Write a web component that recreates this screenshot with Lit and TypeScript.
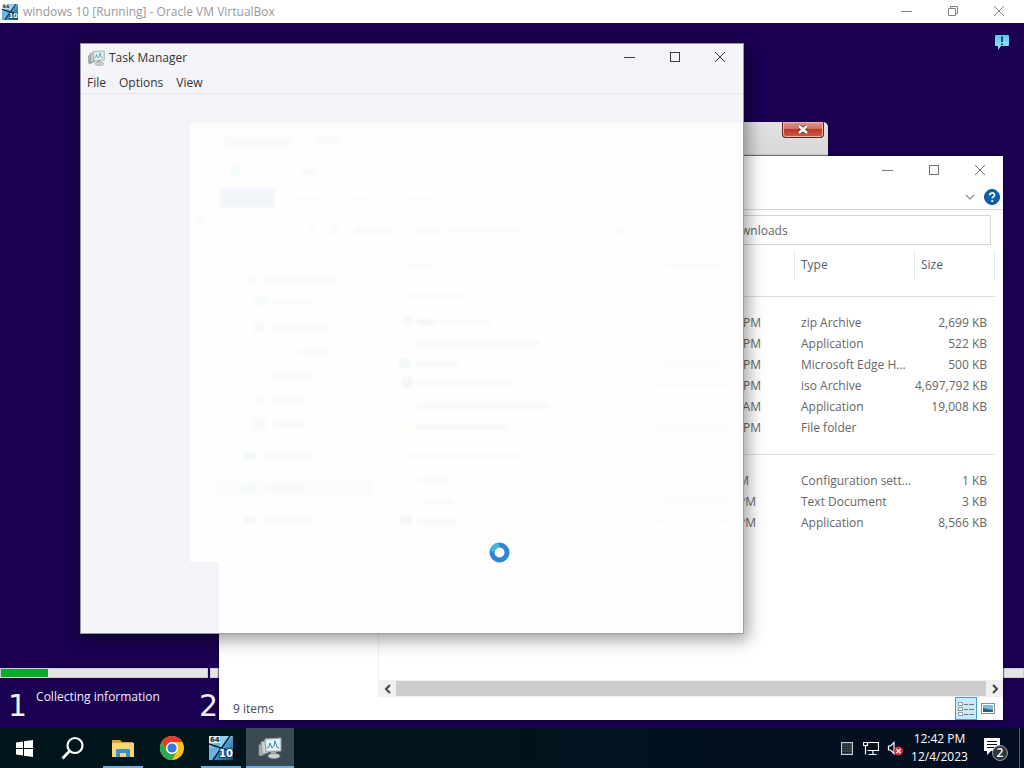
import { LitElement, html, css, svg } from "lit";
import { customElement } from "lit/decorators.js";

interface FileRow {
  when: string;
  end: "wide" | "mid" | "short";
  type: string;
  size: string;
}

const GROUPS: FileRow[][] = [
  [
    { when: "PM", end: "wide", type: "zip Archive", size: "2,699 KB" },
    { when: "PM", end: "wide", type: "Application", size: "522 KB" },
    { when: "PM", end: "wide", type: "Microsoft Edge H...", size: "500 KB" },
    { when: "PM", end: "wide", type: "iso Archive", size: "4,697,792 KB" },
    { when: "AM", end: "wide", type: "Application", size: "19,008 KB" },
    { when: "PM", end: "wide", type: "File folder", size: "" },
  ],
  [
    { when: "PM", end: "short", type: "Configuration sett...", size: "1 KB" },
    { when: "PM", end: "mid", type: "Text Document", size: "3 KB" },
    { when: "PM", end: "mid", type: "Application", size: "8,566 KB" },
  ],
];

const shared = css`
  * {
    box-sizing: border-box;
  }
  button {
    border: 0;
    margin: 0;
    padding: 0;
    background: none;
    color: inherit;
    font: inherit;
    display: flex;
    align-items: center;
    justify-content: center;
  }
  svg {
    display: block;
  }
`;

const vmLogo = (size: number) => html`
  <svg width=${size} height=${size} viewBox="0 0 24 24" aria-hidden="true">
    <defs>
      <linearGradient id="sky" x1="0" y1="0" x2="1" y2="1">
        <stop offset="0" stop-color="#bfe6f6" />
        <stop offset="0.5" stop-color="#4ba3d6" />
        <stop offset="1" stop-color="#12466f" />
      </linearGradient>
    </defs>
    <rect width="24" height="24" fill="url(#sky)" />
    <path d="M12 0h11L13 12 10 13z" fill="#8fd0ee" />
    <path d="M0 13l10-3 3 4-9 10H0z" fill="#64b5e2" />
    <path d="M21 0L4 24M0 8l24 8" stroke="#10202c" stroke-width="1.6" fill="none" />
    <rect width="11" height="7" fill="#e9eef0" />
    <text x="1" y="6" font-size="7" font-weight="700" font-family="DejaVu Sans, sans-serif" fill="#222">64</text>
    <text x="10" y="21" font-size="10" font-weight="700" font-family="DejaVu Sans, sans-serif" fill="#fff" stroke="#15486e" stroke-width="2" paint-order="stroke">10</text>
  </svg>
`;

const monitorIcon = (w: number, h: number) => html`
  <svg width=${w} height=${h} viewBox="0 0 24 22" aria-hidden="true">
    <path d="M1 8l6-3v12l-4 2-2-1z" fill="#aeb7ba" stroke="#7c868a" />
    <path d="M3 5l7-2v13l-6 1z" fill="#c9d0d2" stroke="#88949a" />
    <path d="M7 2l16-1v13l-15 1z" fill="#dfe8ea" stroke="#96a2a6" />
    <path d="M9 4l12-1v9l-11 1z" fill="#e6f3f7" />
    <path d="M9 11l2-1 1-4 2 5 2-2 1-5 2 6 2 1" fill="none" stroke="#3f8aa0" />
    <path d="M13 15h5v3h-5z" fill="#a9b2b5" />
    <ellipse cx="16" cy="19" rx="6" ry="2.500" fill="#cfd5d6" stroke="#8f999c" />
  </svg>
`;

const controls = (where: string, restore = false) => html`
  <div class="controls">
    <button aria-label="Minimize ${where}">
      <svg width="12" height="12"><path d="M0 6.500h11" stroke="currentColor" /></svg>
    </button>
    <button aria-label="${restore ? "Restore" : "Maximize"} ${where}">
      ${restore
        ? html`<svg width="12" height="12"><path d="M1.500 3.500h7v7h-7zM3.500 3.500v-2h7v7h-2" fill="none" stroke="currentColor" /></svg>`
        : html`<svg width="12" height="12"><rect x="1.500" y="1.500" width="9" height="9" fill="none" stroke="currentColor" /></svg>`}
    </button>
    <button aria-label="Close ${where}">
      <svg width="12" height="12"><path d="M1 1l10 10M11 1L1 11" stroke="currentColor" /></svg>
    </button>
  </div>
`;

@customElement("explorer-window")
class ExplorerWindow extends LitElement {
  static styles = [
    shared,
    css`
      :host {
        display: flex;
        flex-direction: column;
        background: #fff;
        color: #666;
      }
      .title {
        display: flex;
        justify-content: flex-end;
        height: 28px;
      }
      .controls {
        display: flex;
        color: #777;
      }
      .controls button {
        width: 46px;
      }
      .ribbon {
        display: flex;
        justify-content: flex-end;
        align-items: center;
        gap: 8px;
        height: 26px;
        padding-right: 3px;
        border-bottom: 1px solid #d8d8d8;
      }
      .search {
        display: flex;
        justify-content: flex-end;
        padding: 5px 12px 0 0;
      }
      .search input {
        width: 320px;
        height: 30px;
        border: 1px solid #d4d4d4;
        border-radius: 0;
        background: #fff;
        padding: 0 12px;
        font: inherit;
        color: #666;
      }
      .search input::placeholder {
        color: #666;
        opacity: 1;
      }
      .body {
        flex: 1;
        min-height: 0;
        display: flex;
        padding-top: 5px;
      }
      .nav {
        width: 160px;
        border-right: 1px solid #f1f1f1;
      }
      .pane {
        flex: 1;
        display: flex;
        flex-direction: column;
        justify-content: space-between;
      }
      .files {
        padding-right: 8px;
      }
      table {
        width: 100%;
        table-layout: fixed;
        border-collapse: separate;
        border-spacing: 0;
      }
      .when {
        width: 138px;
      }
      .type {
        width: 120px;
      }
      .size {
        width: 80px;
      }
      th {
        height: 30px;
        padding: 0 6px;
        font-weight: 400;
        text-align: left;
        color: #56616e;
        border-right: 1px solid #e3e8ec;
      }
      td {
        height: 21px;
        padding: 0 6px;
        white-space: nowrap;
        line-height: 21px;
      }
      .group td {
        height: 32px;
        padding: 0;
      }
      .rule {
        height: 1px;
        background: #dedede;
      }
      .num {
        text-align: right;
        padding: 0 8px 0 0;
      }
      .wide,
      .mid,
      .short {
        text-align: right;
      }
      .wide {
        padding-right: 34px;
      }
      .mid {
        padding-right: 39px;
      }
      .short {
        padding-right: 46px;
      }
      .scroll {
        display: flex;
        height: 17px;
        background: #f0f0f0;
        color: #444;
      }
      .scroll button {
        width: 17px;
      }
      .thumb {
        flex: 1;
        margin: 1px 0;
        background: #cdcdcd;
      }
      .status {
        display: flex;
        align-items: center;
        justify-content: space-between;
        height: 23px;
        padding: 0 4px 0 14px;
        color: #3f4a5a;
      }
      .views {
        display: flex;
      }
      .views button {
        width: 22px;
        height: 23px;
      }
      .views .on {
        background: #cbe8f6;
        border: 1px solid #3fa0cf;
      }
    `,
  ];

  render() {
    return html`
      <div class="title">${controls("Downloads")}</div>
      <div class="ribbon">
        <button aria-label="Expand the ribbon">
          <svg width="12" height="8"><path d="M2 2l4 4 4-4" fill="none" stroke="#999" stroke-width="1.500" /></svg>
        </button>
        <button aria-label="Help">
          <svg width="16" height="16" viewBox="0 0 16 16">
            <circle cx="8" cy="8" r="7.500" fill="#0c63ac" stroke="#0a4f8d" />
            <path d="M5.700 6.200c0-3 4.800-3 4.800-.2 0 1.700-2.300 1.700-2.300 3.500" fill="none" stroke="#fff" stroke-width="1.600" />
            <circle cx="8.200" cy="12" r="1.100" fill="#fff" />
          </svg>
        </button>
      </div>
      <div class="search"><input type="search" aria-label="Search Downloads" placeholder="Search Downloads" /></div>
      <div class="body">
        <div class="nav"></div>
        <div class="pane">
          <div class="files">
            <table>
              <thead>
                <tr>
                  <th aria-label="Name"></th>
                  <th class="when" aria-label="Date modified"></th>
                  <th class="type">Type</th>
                  <th class="size">Size</th>
                </tr>
              </thead>
              ${GROUPS.map(
                (rows) => html`
                  <tbody>
                    <tr class="group"><td colspan="4"><div class="rule"></div></td></tr>
                    ${rows.map(
                      (r) => html`
                        <tr>
                          <td></td>
                          <td class=${r.end}>${r.when}</td>
                          <td>${r.type}</td>
                          <td class="num">${r.size}</td>
                        </tr>
                      `
                    )}
                  </tbody>
                `
              )}
            </table>
          </div>
          <div class="scroll">
            <button aria-label="Scroll left">
              <svg width="8" height="10"><path d="M6 1L2 5l4 4" fill="none" stroke="currentColor" stroke-width="2" /></svg>
            </button>
            <div class="thumb"></div>
            <button aria-label="Scroll right">
              <svg width="8" height="10"><path d="M2 1l4 4-4 4" fill="none" stroke="currentColor" stroke-width="2" /></svg>
            </button>
          </div>
        </div>
      </div>
      <div class="status">
        <span>9 items</span>
        <div class="views">
          <button class="on" aria-label="Details view">
            <svg width="16" height="14">
              <path d="M.5.500h4v3h-4zM.5 5.500h4v3h-4zM.5 10.500h4v3h-4z" fill="#fff" stroke="#8b9aa3" />
              <path d="M6 2.500h4M11 2.500h5M6 7.500h4M11 7.500h5M6 12.500h4M11 12.500h5" stroke="#6d7980" />
            </svg>
          </button>
          <button aria-label="Large icons view">
            <svg width="14" height="11">
              <rect x=".5" y=".5" width="13" height="10" fill="#fff" stroke="#8b8f94" />
              <rect x="2" y="2" width="10" height="7" fill="#7fb9e3" />
              <path d="M2 5l4 1 6 1v2H2z" fill="#2d5f7d" />
            </svg>
          </button>
        </div>
      </div>
    `;
  }
}

const smudge = (x: number, y: number, w: number, h: number, fill: string) =>
  svg`<rect x=${x} y=${y} width=${w} height=${h} fill=${fill} />`;

@customElement("task-manager")
class TaskManager extends LitElement {
  static styles = [
    shared,
    css`
      :host {
        display: flex;
        flex-direction: column;
        background: #f4f3f8;
        color: #333;
      }
      .title {
        display: flex;
        align-items: center;
        height: 30px;
        padding-left: 8px;
      }
      .name {
        flex: 1;
        padding-left: 4px;
      }
      .controls {
        display: flex;
        align-self: stretch;
        padding-right: 2px;
        color: #3c3c40;
      }
      .controls button {
        width: 45px;
        padding-bottom: 2px;
      }
      .menu {
        display: flex;
        gap: 13px;
        height: 21px;
        padding-left: 7px;
        border-bottom: 1px solid #e6e5ea;
      }
      .content {
        flex: 1;
        min-height: 0;
      }
      .spin {
        position: absolute;
        left: 409px;
        top: 499px;
      }
    `,
  ];

  render() {
    return html`
      <div class="title">
        ${monitorIcon(17, 16)}
        <span class="name">Task Manager</span>
        ${controls("Task Manager")}
      </div>
      <div class="menu">
        <button>File</button>
        <button>Options</button>
        <button>View</button>
      </div>
      <div class="content">
        <svg width="100%" height="100%" aria-hidden="true">
          <defs>
            <filter id="soft"><feGaussianBlur stdDeviation="1.500" /></filter>
          </defs>
          <svg x="-80" y="-94" width="825" height="728" viewBox="0 0 825 728">
            <rect x="190" y="123" width="554" height="439" fill="#fdfdfe" />
            <rect x="219" y="157" width="525" height="477" fill="#fefefe" />
            <g filter="url(#soft)" opacity="0.75">
              ${smudge(224, 137, 66, 10, "#f7f9f9")} ${smudge(318, 137, 20, 7, "#f7f8f8")}
              ${smudge(231, 166, 9, 10, "#f0f9f8")} ${smudge(303, 169, 12, 5, "#f4f5f5")}
              ${smudge(220, 188, 55, 20, "#eff4fb")} ${smudge(198, 216, 8, 8, "#f9f9f9")}
              ${smudge(290, 197, 30, 5, "#fafafa")} ${smudge(352, 197, 22, 5, "#fafafa")} ${smudge(402, 197, 30, 5, "#fafafa")}
              ${smudge(309, 226, 6, 9, "#f8f8f8")} ${smudge(332, 226, 7, 9, "#f8f8f8")}
              ${smudge(355, 228, 37, 6, "#f8f8f8")} ${smudge(416, 228, 22, 6, "#f8f8f8")} ${smudge(450, 228, 72, 5, "#f8f8f8")}
              ${smudge(616, 227, 8, 8, "#f9f9f9")} ${smudge(665, 262, 60, 6, "#fafafa")}
              ${smudge(249, 276, 9, 8, "#f2faf9")} ${smudge(265, 277, 70, 6, "#f7f9f8")}
              ${smudge(254, 296, 14, 10, "#f3fafa")} ${smudge(272, 299, 42, 6, "#f8f9f9")}
              ${smudge(254, 322, 10, 10, "#f4f7f7")} ${smudge(273, 324, 56, 7, "#f6f6f6")}
              ${smudge(300, 349, 30, 6, "#f8f8f8")} ${smudge(273, 373, 40, 7, "#f7f7f7")}
              ${smudge(256, 396, 8, 9, "#f5f7f7")} ${smudge(273, 397, 30, 6, "#f8f8f8")}
              ${smudge(253, 418, 12, 12, "#f4f5f5")} ${smudge(273, 421, 32, 7, "#f5f5f5")}
              ${smudge(243, 452, 13, 8, "#eff8f6")} ${smudge(264, 453, 50, 6, "#f6f9f8")}
              ${smudge(220, 480, 154, 16, "#fafbfb")} ${smudge(243, 484, 14, 9, "#f2f9f8")} ${smudge(268, 484, 35, 8, "#f5f5f5")}
              ${smudge(244, 516, 13, 8, "#eff8f6")} ${smudge(265, 517, 46, 7, "#f6f9f8")}
              ${smudge(403, 263, 28, 6, "#fafafa")} ${smudge(403, 293, 60, 6, "#fafafa")}
              ${smudge(404, 316, 9, 10, "#f4f5f5")} ${smudge(417, 319, 18, 6, "#f3f3f3")} ${smudge(437, 319, 54, 6, "#f9f9f9")}
              ${smudge(415, 340, 124, 6, "#f5f6f6")} ${smudge(399, 358, 11, 10, "#f1f6f6")} ${smudge(416, 361, 41, 6, "#f5f6f6")}
              ${smudge(402, 377, 11, 11, "#f2f3f3")} ${smudge(416, 380, 94, 6, "#f8f8f8")}
              ${smudge(416, 403, 134, 6, "#f6f7f7")} ${smudge(402, 422, 10, 9, "#fdfcf3")} ${smudge(416, 424, 94, 6, "#f7f7f7")}
              ${smudge(403, 453, 120, 6, "#fafafa")}
              ${smudge(418, 477, 32, 6, "#f8f8f8")} ${smudge(422, 499, 32, 6, "#f9f9f9")}
              ${smudge(400, 515, 12, 10, "#f0f2f2")} ${smudge(417, 519, 40, 6, "#f6f6f6")}
              ${smudge(660, 319, 64, 5, "#fafafa")} ${smudge(660, 361, 64, 5, "#fafafa")} ${smudge(656, 382, 74, 5, "#fafafa")}
              ${smudge(656, 424, 74, 5, "#fafafa")} ${smudge(660, 498, 70, 5, "#fafafa")} ${smudge(656, 519, 74, 5, "#fafafa")}
            </g>
          </svg>
        </svg>
      </div>
      <svg class="spin" width="21" height="21" viewBox="0 0 21 21" role="img" aria-label="Busy">
        <circle cx="10.500" cy="10.500" r="7.500" fill="#fff" stroke="#2f86d6" stroke-width="5" />
        <path d="M3.300 9.500A7.400 7.400 0 0 1 10 3" fill="none" stroke="#45b8e6" stroke-width="4" />
      </svg>
    `;
  }
}

@customElement("app-root")
class AppRoot extends LitElement {
  static styles = [
    shared,
    css`
      :host {
        display: flex;
        flex-direction: column;
        height: 100vh;
        overflow: hidden;
        font: 12px/16px "Open Sans", "Noto Sans", sans-serif;
      }
      .host-title {
        display: flex;
        align-items: center;
        height: 23px;
        padding-left: 2px;
        gap: 5px;
        background: #fff;
        color: #999;
      }
      .host-title .name {
        flex: 1;
      }
      .controls {
        display: flex;
        align-self: stretch;
        padding-right: 2px;
        color: #808080;
      }
      .controls button {
        width: 46px;
        padding-bottom: 2px;
      }
      .desktop {
        flex: 1;
        min-height: 0;
        position: relative;
        overflow: hidden;
        display: flex;
        flex-direction: column;
        justify-content: space-between;
        background: #1a0051;
      }
      .notice {
        align-self: flex-end;
        padding: 11px 14px 0 0;
      }
      .bars {
        display: flex;
        gap: 2px;
        height: 10px;
      }
      .bar {
        background: #e5e4e6;
        border: 1px solid #cfcdd4;
        width: 208px;
      }
      .bar.rest {
        flex: 1;
      }
      .fill {
        height: 100%;
        background: #0caa28;
      }
      .steps {
        display: flex;
        height: 50px;
        color: #f1effa;
      }
      .step {
        display: flex;
        gap: 9px;
        width: 191px;
        padding-left: 8px;
      }
      .digit {
        font-family: "DejaVu Sans", sans-serif;
        font-size: 30px;
        line-height: 40px;
        padding-top: 8px;
      }
      .label {
        padding-top: 11px;
      }
      .old {
        position: absolute;
        left: 500px;
        top: 99px;
        width: 328px;
        height: 60px;
        display: flex;
        justify-content: flex-end;
        align-items: flex-start;
        padding-right: 4px;
        border-radius: 0 5px 0 0;
        background: linear-gradient(#e2e2e2, #d0d0d0);
      }
      .old button {
        width: 42px;
        height: 16px;
        border: 1px solid #5a2525;
        border-top: 0;
        border-radius: 0 0 4px 4px;
        box-shadow: inset 0 0 0 1px #e9b3a8;
        background: linear-gradient(#dd9a8c, #cf7060 45%, #b93a28 50%, #cf5b45);
      }
      explorer-window {
        position: absolute;
        left: 219px;
        top: 133px;
        width: 784px;
        height: 564px;
        box-shadow: 0 0 1px 1px rgba(10, 0, 30, 0.5);
      }
      task-manager {
        position: absolute;
        left: 80px;
        top: 20px;
        width: 664px;
        height: 591px;
        outline: 1px solid rgba(60, 60, 70, 0.5);
        outline-offset: -1px;
        box-shadow: 2px 4px 16px 2px rgba(0, 0, 0, 0.38);
      }
      .taskbar {
        display: flex;
        height: 40px;
        background: linear-gradient(90deg, #00161b, #02121e 60%, #050d20);
        color: #fff;
      }
      .app {
        width: 48px;
      }
      .app.find {
        width: 50px;
      }
      .open {
        box-shadow: inset 0 -2px #76a9dc;
        width: 40px;
        margin: 0 5px;
      }
      .app.active {
        background: #3a4a52;
        box-shadow: inset 0 -2px #76a9dc;
      }
      .tray {
        display: flex;
        align-items: center;
        margin-left: auto;
      }
      .tray .tiny {
        width: 24px;
      }
      .clock {
        width: 65px;
        flex-direction: column;
        line-height: 18px;
      }
      .notes {
        width: 48px;
        height: 40px;
        border-right: 1px solid #4d5a68;
        margin-right: 4px;
      }
    `,
  ];

  render() {
    return html`
      <div class="host-title">
        ${vmLogo(16)}
        <span class="name">windows 10 [Running] - Oracle VM VirtualBox</span>
        ${controls("virtual machine", true)}
      </div>
      <div class="desktop">
        <div class="notice">
          <svg width="16" height="17" viewBox="0 0 16 17" role="img" aria-label="Notice">
            <defs>
              <linearGradient id="bubble" x1="0" y1="0" x2="0" y2="1">
                <stop offset="0" stop-color="#55c8f2" />
                <stop offset="1" stop-color="#a4e6fb" />
              </linearGradient>
            </defs>
            <path d="M2 1h12q1 0 1 1v9q0 1-1 1H7l-3 4v-4H2q-1 0-1-1V2q0-1 1-1z" fill="url(#bubble)" />
            <path d="M8 2.500v5.500M8 9.500v1.800" stroke="#0b2230" stroke-width="1.500" />
          </svg>
        </div>
        <div class="setup">
          <div class="bars">
            <div class="bar"><div class="fill" style="width:23%"></div></div>
            <div class="bar rest"></div>
          </div>
          <div class="steps">
            <div class="step"><span class="digit">1</span><span class="label">Collecting information</span></div>
            <div class="step"><span class="digit">2</span></div>
          </div>
        </div>
        <div class="old">
          <button aria-label="Close">
            <svg width="12" height="9"><path d="M2 1l8 7M10 1L2 8" stroke="#5c3a3a" stroke-width="4" /><path d="M2 1l8 7M10 1L2 8" stroke="#fff" stroke-width="2.400" /></svg>
          </button>
        </div>
        <explorer-window></explorer-window>
        <task-manager></task-manager>
      </div>
      <div class="taskbar">
        <button class="app" aria-label="Start">
          <svg width="17" height="17" viewBox="0 0 17 17"><path d="M0 2.500l7-1V8H0zM8 1.300L17 0v8H8zM0 9h7v6.500l-7-1zM8 9h9v8l-9-1.300z" fill="#fff" /></svg>
        </button>
        <button class="app find" aria-label="Search">
          <svg width="24" height="24" viewBox="0 0 24 24"><circle cx="14" cy="9.500" r="7.500" fill="none" stroke="#fff" stroke-width="2.200" /><path d="M8.500 15L1.500 22.500" stroke="#fff" stroke-width="2.600" /></svg>
        </button>
        <button class="open" aria-label="File Explorer">
          <svg width="22" height="19" viewBox="0 0 22 19">
            <path d="M0 1h8l2 2h11v3H0z" fill="#dba32a" />
            <path d="M0 4h22v14H0z" fill="#fad573" />
            <path d="M4 18v-7q0-1 1-1h12q1 0 1 1v7h-4v-4H8v4z" fill="#3b8fc9" />
          </svg>
        </button>
        <button class="app" aria-label="Chrome">
          <svg width="24" height="24" viewBox="0 0 24 24">
            <circle cx="12" cy="12" r="12" fill="#fbc116" />
            <path d="M1.600 6A12 12 0 0 1 22.400 6H12a6 6 0 0 0-5.200 9z" fill="#e33b2e" />
            <path d="M1.600 6A12 12 0 0 0 12 24l5.200-9A6 6 0 0 1 6.800 15z" fill="#2da94f" />
            <circle cx="12" cy="12" r="6" fill="#fff" />
            <circle cx="12" cy="12" r="4.600" fill="#3478e6" />
          </svg>
        </button>
        <button class="open" aria-label="Virtual machine">${vmLogo(24)}</button>
        <button class="app active" aria-label="Task Manager">${monitorIcon(24, 22)}</button>
        <div class="tray">
          <button class="tiny" aria-label="Input">
            <svg width="12" height="13"><rect x=".5" y=".5" width="11" height="12" fill="#4d5660" stroke="#c9ced3" /><path d="M3 1v11M5.500 1v11M8 1v11M1 3h10M1 5.500h10M1 8h10M1 10.500h10" stroke="#20272e" /></svg>
          </button>
          <button class="tiny" aria-label="Network">
            <svg width="16" height="14"><path d="M4.500 1.500h11v8h-11M10 9.500v4M5.500 13.500h8M.5 1.500h4v3h-4zM2.500 4.500v9" fill="none" stroke="#fff" stroke-width="1.200" /></svg>
          </button>
          <button class="tiny" aria-label="Volume muted">
            <svg width="17" height="15"><path d="M1.500 5h2L7 1.500v11L3.500 9h-2z" fill="none" stroke="#fff" stroke-width="1.200" /><circle cx="11.500" cy="10" r="4.500" fill="#d63434" /><path d="M9.500 8l4 4M13.500 8l-4 4" stroke="#fff" stroke-width="1.300" /></svg>
          </button>
          <button class="clock"><span>12:42 PM</span><span>12/4/2023</span></button>
          <button class="notes" aria-label="2 notifications">
            <svg width="26" height="26" viewBox="0 0 26 26">
              <path d="M1 3h16v13H8l-4 4v-4H1z" fill="#fff" />
              <path d="M4 6.500h10M4 9.500h10M4 12.500h7" stroke="#0a1420" />
              <circle cx="17" cy="18" r="7.500" fill="#30363d" stroke="#9aa0a6" />
              <text x="17" y="22" text-anchor="middle" font-size="12" font-weight="600" fill="#fff">2</text>
            </svg>
          </button>
        </div>
      </div>
    `;
  }
}
